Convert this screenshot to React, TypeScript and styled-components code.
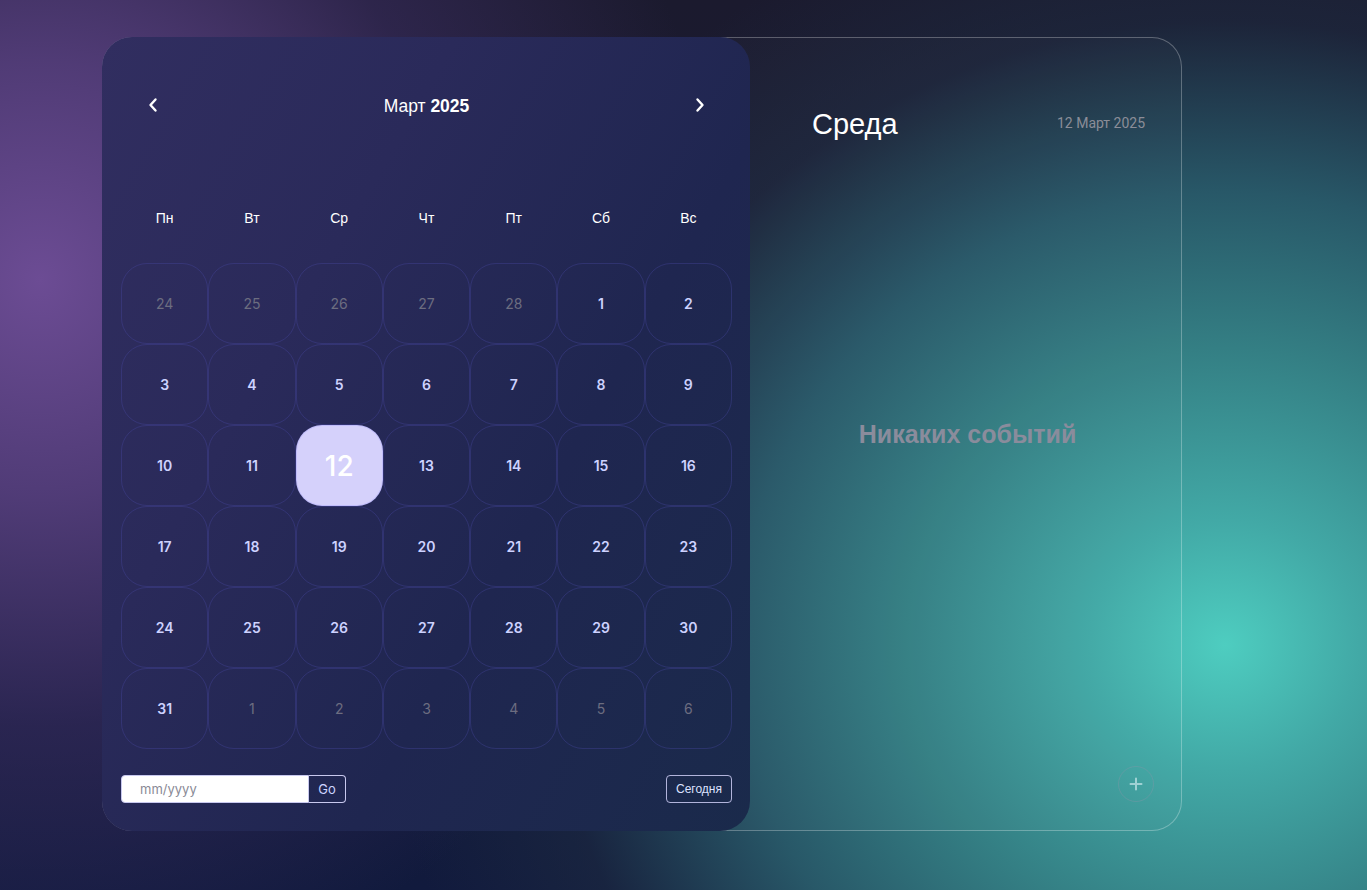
import React from "react";
import styled, { createGlobalStyle } from "styled-components";

const Global = createGlobalStyle`
  html, body { margin: 0; padding: 0; }
  body {
    width: 1367px;
    height: 890px;
    overflow: hidden;
    font-family: "Liberation Sans", Arial, sans-serif;
    background:
      radial-gradient(ellipse 680px 720px at 40px 280px, rgba(108, 76, 148, 1) 0%, rgba(88, 64, 128, 0.88) 30%, rgba(64, 48, 104, 0.5) 62%, rgba(40, 32, 80, 0) 100%),
      radial-gradient(ellipse 840px 780px at 1225px 645px, #4ecdc0 0%, #42a9a6 16%, #347f84 38%, #285868 58%, rgba(30, 44, 66, 0.55) 80%, rgba(28, 30, 52, 0) 100%),
      linear-gradient(180deg, #1b1a2e 0%, #171a34 50%, #111a3d 100%);
  }
`;

const Page = styled.div`
  padding: 37px 0 0 102px;
`;

const Shell = styled.div`
  width: 1080px;
  height: 794px;
  box-sizing: border-box;
  border: 1px solid rgba(255, 255, 255, 0.28);
  border-radius: 30px;
  display: flex;
  background: rgba(255, 255, 255, 0.015);
`;

const CalendarPanel = styled.section`
  width: 648px;
  margin: -1px 0 -1px -1px;
  box-sizing: border-box;
  border-radius: 30px;
  padding: 49px 18px 27px 19px;
  background: linear-gradient(120deg, #312e60 0%, #2a2a5a 32%, #1f2650 64%, #1a2a4b 100%);
  display: flex;
  flex-direction: column;
`;

const Header = styled.div`
  height: 40px;
  display: grid;
  grid-template-columns: 64px 1fr 64px;
  align-items: center;
`;

const NavButton = styled.button`
  border: none;
  background: transparent;
  padding: 0;
  height: 40px;
  margin-top: -2px;
  display: flex;
  align-items: center;
  justify-content: center;
  cursor: pointer;
`;

const Title = styled.h2`
  margin: 0;
  text-align: center;
  font-family: "Liberation Sans", Arial, sans-serif;
  font-size: 17.5px;
  font-weight: 400;
  color: #ffffff;
  b { font-weight: 700; }
`;

const WeekRow = styled.div`
  margin-top: 72px;
  height: 40px;
  display: grid;
  grid-template-columns: repeat(7, 1fr);
  align-items: center;
`;

const WeekDay = styled.div`
  text-align: center;
  font-size: 14px;
  color: #ffffff;
`;

const Grid = styled.div`
  margin-top: 25px;
  display: grid;
  grid-template-columns: repeat(7, 1fr);
  grid-auto-rows: 81px;
`;

const Day = styled.button<{ $muted?: boolean; $selected?: boolean }>`
  margin: 0;
  box-sizing: border-box;
  border: 1px solid ${(p) => (p.$selected ? "rgba(190,185,250,0.9)" : "rgba(72, 72, 160, 0.38)")};
  border-radius: 26px;
  background: ${(p) => (p.$selected ? "#d5d1fb" : "transparent")};
  color: ${(p) => (p.$selected ? "#ffffff" : p.$muted ? "#6c6d80" : "#cdd2ff")};
  font-family: Inter, "Noto Sans", sans-serif;
  font-size: ${(p) => (p.$selected ? "28px" : "14px")};
  font-weight: ${(p) => (p.$selected ? 500 : p.$muted ? 400 : 600)};
  display: flex;
  align-items: center;
  justify-content: center;
  cursor: pointer;
`;

const Footer = styled.div`
  margin-top: 26px;
  height: 28px;
  display: flex;
  align-items: center;
  justify-content: space-between;
`;

const JumpForm = styled.div`
  display: flex;
  height: 28px;
`;

const MonthInput = styled.input`
  width: 188px;
  height: 28px;
  box-sizing: border-box;
  border: 1px solid #c8c8ee;
  border-radius: 4px 0 0 4px;
  background: #ffffff;
  padding: 0 0 0 18px;
  font-family: Inter, "Noto Sans", sans-serif;
  font-size: 13px;
  color: #333;
  outline: none;
  &::placeholder { color: #8a8a96; }
`;

const GoButton = styled.button`
  width: 37px;
  height: 28px;
  box-sizing: border-box;
  border: 1px solid #c8c8ee;
  border-left: none;
  border-radius: 0 4px 4px 0;
  background: transparent;
  color: #ccd3ff;
  font-family: Inter, "Noto Sans", sans-serif;
  font-size: 13px;
  padding: 0;
`;

const TodayButton = styled.button`
  height: 28px;
  width: 66px;
  box-sizing: border-box;
  border: 1px solid rgba(205, 205, 245, 0.85);
  border-radius: 4px;
  background: transparent;
  color: #dde2ff;
  font-family: "Liberation Sans", Arial, sans-serif;
  font-size: 12px;
  padding: 0;
`;

const EventsPanel = styled.section`
  flex: 1;
  position: relative;
  box-sizing: border-box;
  padding: 68px 36px 0 62px;
  display: flex;
  flex-direction: column;
`;

const EventsHeader = styled.div`
  height: 36px;
  display: flex;
  align-items: center;
  justify-content: space-between;
`;

const DayName = styled.h1`
  margin: 0;
  font-family: "Liberation Sans", Arial, sans-serif;
  font-weight: 400;
  font-size: 29px;
  color: #ffffff;
`;

const DateLabel = styled.span`
  font-family: Roboto, "Noto Sans", sans-serif;
  font-size: 14px;
  color: #8b8d98;
  margin-top: -3px;
`;

const Empty = styled.div`
  flex: 1;
  display: flex;
  align-items: center;
  justify-content: center;
  padding: 0 0 104px 0;
  margin-left: -22px;
  font-family: "Liberation Sans", Arial, sans-serif;
  font-weight: 700;
  font-size: 25px;
  color: #8a8c9c;
`;

const AddButton = styled.button`
  position: absolute;
  right: 27px;
  bottom: 28px;
  width: 36px;
  height: 36px;
  border-radius: 50%;
  border: 1px solid rgba(140, 150, 170, 0.35);
  background: transparent;
  display: flex;
  align-items: center;
  justify-content: center;
  padding: 0;
`;

const Chevron = ({ dir }: { dir: "left" | "right" }) => (
  <svg width="12" height="16" viewBox="0 0 12 16">
    <path
      d={dir === "left" ? "M8.5 2.5 L3.5 8 L8.5 13.5" : "M3.5 2.5 L8.5 8 L3.5 13.5"}
      fill="none"
      stroke="#ffffff"
      strokeWidth="2.4"
      strokeLinecap="round"
      strokeLinejoin="round"
    />
  </svg>
);

type Cell = { n: number; muted?: boolean; selected?: boolean };

const cells: Cell[] = [
  ...[24, 25, 26, 27, 28].map((n) => ({ n, muted: true })),
  ...Array.from({ length: 31 }, (_, i) => ({ n: i + 1, selected: i + 1 === 12 })),
  ...[1, 2, 3, 4, 5, 6].map((n) => ({ n, muted: true })),
];

const weekdays = ["Пн", "Вт", "Ср", "Чт", "Пт", "Сб", "Вс"];

export default function App() {
  return (
    <>
      <Global />
      <Page>
        <Shell>
          <CalendarPanel>
            <Header>
              <NavButton aria-label="prev">
                <Chevron dir="left" />
              </NavButton>
              <Title>
                Март <b>2025</b>
              </Title>
              <NavButton aria-label="next">
                <Chevron dir="right" />
              </NavButton>
            </Header>
            <WeekRow>
              {weekdays.map((d) => (
                <WeekDay key={d}>{d}</WeekDay>
              ))}
            </WeekRow>
            <Grid>
              {cells.map((c, i) => (
                <Day key={i} $muted={c.muted} $selected={c.selected}>
                  {c.n}
                </Day>
              ))}
            </Grid>
            <Footer>
              <JumpForm>
                <MonthInput placeholder="mm/yyyy" />
                <GoButton>Go</GoButton>
              </JumpForm>
              <TodayButton>Сегодня</TodayButton>
            </Footer>
          </CalendarPanel>
          <EventsPanel>
            <EventsHeader>
              <DayName>Среда</DayName>
              <DateLabel>12 Март 2025</DateLabel>
            </EventsHeader>
            <Empty>Никаких событий</Empty>
            <AddButton aria-label="add">
              <svg width="14" height="14" viewBox="0 0 14 14">
                <path d="M7 1.5 V12.5 M1.5 7 H12.5" stroke="rgba(190,225,230,0.75)" strokeWidth="2" strokeLinecap="round" />
              </svg>
            </AddButton>
          </EventsPanel>
        </Shell>
      </Page>
    </>
  );
}
